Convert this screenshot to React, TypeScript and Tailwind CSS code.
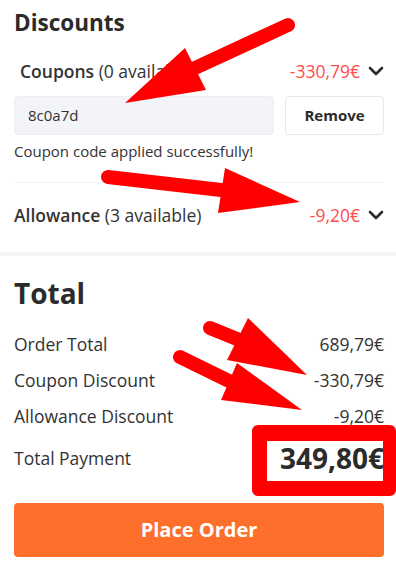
import React from "react";

function Chevron() {
    return (
        <svg width="16" height="10" viewBox="0 0 16 10" className="ml-2 shrink-0">
            <polyline points="2,2 8,8 14,2" fill="none" stroke="#2b2b2b" strokeWidth="2.6" strokeLinecap="round" strokeLinejoin="round" />
        </svg>
    );
}

function Annotations() {
    return (
        <svg className="absolute inset-0 pointer-events-none" width="396" height="565" viewBox="0 0 396 565">
            <g fill="#ff0000" stroke="#ff0000" strokeLinecap="round">
                <line x1="288" y1="25" x2="195" y2="68" strokeWidth="14" />
                <polygon points="125,103 185,48 206,90" strokeWidth="0" />
                <line x1="108" y1="177" x2="221" y2="190" strokeWidth="14" />
                <polygon points="300,202 225,168 218,213" strokeWidth="0" />
                <line x1="180" y1="357" x2="229" y2="381" strokeWidth="14" />
                <polygon points="302,410 237,363 221,400" strokeWidth="0" />
                <line x1="210" y1="328" x2="237" y2="339" strokeWidth="14" />
                <polygon points="307,375 248,318 227,360" strokeWidth="0" />
            </g>
            <path
                fill="#ff0000"
                fillRule="evenodd"
                d="M258,425 H390 A6,6 0 0 1 396,431 V490 A6,6 0 0 1 390,496 H258 A6,6 0 0 1 252,490 V431 A6,6 0 0 1 258,425 Z M267,441 V481 H383 V441 Z"
            />
        </svg>
    );
}

export default function App() {
    return (
        <div className="relative w-[396px] h-[565px] overflow-hidden bg-white text-[#333] font-['Open_Sans',sans-serif]">
            <div className="pl-[14px] pr-3 pt-[7px]">
                <h2 className="text-[22.5px] leading-8 font-bold text-[#2b2b2b]">Discounts</h2>

                <div className="mt-[20px] flex items-center justify-between h-6 text-[17.5px] leading-6">
                    <div className="pl-[6px]">
                        <span className="font-semibold">Coupons</span> (0 available)
                    </div>
                    <div className="flex items-center">
                        <span className="text-[#ff4d4f]">-330,79€</span>
                        <Chevron />
                    </div>
                </div>

                <div className="mt-[13px] flex gap-[11px]">
                    <div className="flex-1 h-[39px] rounded-[4px] bg-[#f3f4f8] border border-[#eceef3] flex items-center px-[13px] text-[15px]">
                        8c0a7d
                    </div>
                    <button className="w-[99px] h-[39px] rounded-[4px] border border-[#e6e8ec] bg-white text-[15px] font-bold text-[#2b2b2b]">
                        Remove
                    </button>
                </div>

                <p className="mt-[6px] text-[15px] leading-5">Coupon code applied successfully!</p>

                <div className="mt-[21px] h-px bg-[#eef0f3]" />

                <div className="mt-5 flex items-center justify-between h-6 text-[17.5px] leading-6">
                    <div>
                        <span className="font-semibold">Allowance</span> (3 available)
                    </div>
                    <div className="flex items-center">
                        <span className="text-[#ff4d4f]">-9,20€</span>
                        <Chevron />
                    </div>
                </div>
            </div>

            <div className="mt-[25px] h-1 bg-[#f3f4f8]" />

            <div className="pl-[14px] pr-3 pt-[19px]">
                <h2 className="text-[28px] leading-9 font-bold text-[#2b2b2b]">Total</h2>

                <div className="mt-[21px] flex flex-col gap-3 text-[17.5px] leading-6">
                    <div className="flex justify-between">
                        <span>Order Total</span>
                        <span>689,79€</span>
                    </div>
                    <div className="flex justify-between">
                        <span>Coupon Discount</span>
                        <span>-330,79€</span>
                    </div>
                    <div className="flex justify-between">
                        <span>Allowance Discount</span>
                        <span>-9,20€</span>
                    </div>
                </div>

                <div className="mt-[10px] flex items-center justify-between h-10">
                    <span className="text-[17.5px]">Total Payment</span>
                    <span className="text-[28px] leading-10 font-bold text-[#2b2b2b]">349,80€</span>
                </div>

                <button className="mt-[25px] w-full h-[54px] rounded-[4px] bg-[#ff6f2c] text-white text-[20px] font-bold">
                    Place Order
                </button>
            </div>

            <Annotations />
        </div>
    );
}
